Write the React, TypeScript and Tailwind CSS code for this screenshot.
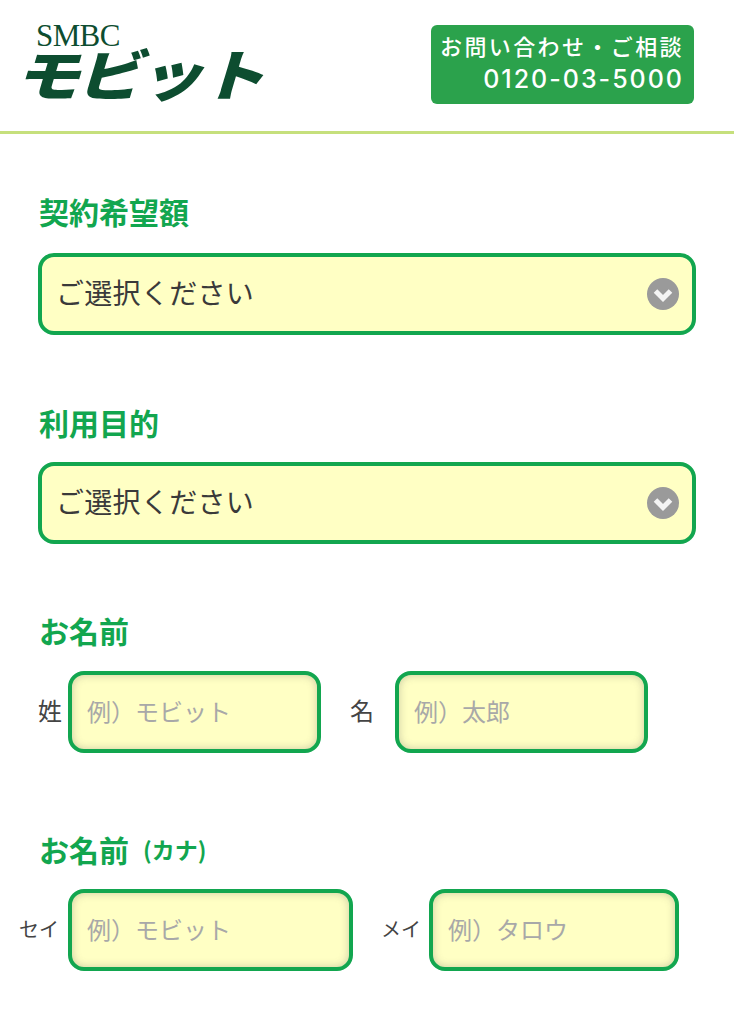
import React from "react";

const font = "font-['Noto_Sans_CJK_JP','Noto_Sans',sans-serif]";

function SectionTitle({ children, sub }: { children: React.ReactNode; sub?: string }) {
  return (
    <h2 className="flex h-[40px] items-center pb-[4px] pl-[39px] text-[30px] font-bold leading-[36px] text-[#12a64f]">
      {children}
      {sub && <span className="ml-[14px] text-[23px] font-bold">{sub}</span>}
    </h2>
  );
}

function SelectBox() {
  return (
    <div className="relative mx-[38px] h-[82px]">
      <select className="h-full w-full appearance-none rounded-[16px] border-[4px] border-[#12a64f] bg-[#ffffc4] pb-[4px] pl-[14px] text-[28px] tracking-[0.3px] text-[#3a3a3a] outline-none">
        <option>ご選択ください</option>
      </select>
      <svg className="pointer-events-none absolute right-[17px] top-[25px]" width="32" height="32" viewBox="0 0 32 32">
        <circle cx="16" cy="16" r="16" fill="#9a9a9a" />
        <path d="M8.5 13 L16 20.5 L23.5 13" fill="none" stroke="#f4f4f4" strokeWidth="5" strokeLinejoin="miter" />
      </svg>
    </div>
  );
}

function TextBox({ placeholder, className }: { placeholder: string; className: string }) {
  return (
    <input
      placeholder={placeholder}
      className={`h-[82px] rounded-[16px] border-[4px] border-[#12a64f] bg-[#ffffc4] pb-[4px] pl-[15px] text-[24px] text-[#333] shadow-[inset_0_0_8px_rgba(90,90,90,0.32)] outline-none placeholder:text-[#a8a8a8] ${className}`}
    />
  );
}

export default function App() {
  return (
    <div className={`h-[1024px] w-[734px] overflow-hidden bg-white ${font}`}>
      <header className="flex h-[134px] items-start justify-between border-b-[3px] border-[#c6e07c] pl-[23px] pr-[40px]">
        <div className="flex flex-col pt-[21px]">
          <span className="ml-[13px] font-['Liberation_Serif',serif] text-[31px] leading-[30px] tracking-[-0.6px] text-[#0d4d30]">SMBC</span>
          <span className="ml-[-2px] mt-[-8px] origin-left -skew-x-[14deg] scale-x-[1.19] whitespace-nowrap text-[55px] font-black leading-[58px] tracking-[-3px] text-[#0d4d30]">
            モビット
          </span>
        </div>
        <a className="mt-[25px] flex h-[79px] w-[263px] flex-col items-end rounded-[6px] bg-[#2ba24c] pr-[10px] pt-[4px] font-medium text-white">
          <span className="whitespace-nowrap text-[22px] leading-[32px] tracking-[2.4px]">お問い合わせ・ご相談</span>
          <span className="mt-[2px] whitespace-nowrap font-['Inter',sans-serif] text-[25px] leading-[32px] tracking-[2px]">0120-03-5000</span>
        </a>
      </header>

      <section className="pt-[59px]">
        <SectionTitle>契約希望額</SectionTitle>
        <div className="mt-[20px]">
          <SelectBox />
        </div>
      </section>

      <section className="pt-[69px]">
        <SectionTitle>利用目的</SectionTitle>
        <div className="mt-[18px]">
          <SelectBox />
        </div>
      </section>

      <section className="pt-[68px]">
        <SectionTitle>お名前</SectionTitle>
        <div className="mt-[19px] flex items-center pl-[38px]">
          <span className="w-[30px] pb-[4px] text-[24px] text-[#444]">姓</span>
          <TextBox placeholder="例）モビット" className="w-[253px]" />
          <span className="ml-[29px] w-[45px] pb-[4px] text-[24px] text-[#444]">名</span>
          <TextBox placeholder="例）太郎" className="w-[253px]" />
        </div>
      </section>

      <section className="pt-[78px]">
        <SectionTitle sub="(カナ)">お名前</SectionTitle>
        <div className="mt-[18px] flex items-center pl-[19px]">
          <span className="w-[49px] whitespace-nowrap pb-[2px] text-[20px] text-[#444]">セイ</span>
          <TextBox placeholder="例）モビット" className="w-[285px]" />
          <span className="ml-[28px] w-[48px] whitespace-nowrap pb-[2px] text-[20px] text-[#444]">メイ</span>
          <TextBox placeholder="例）タロウ" className="w-[250px]" />
        </div>
      </section>
    </div>
  );
}
